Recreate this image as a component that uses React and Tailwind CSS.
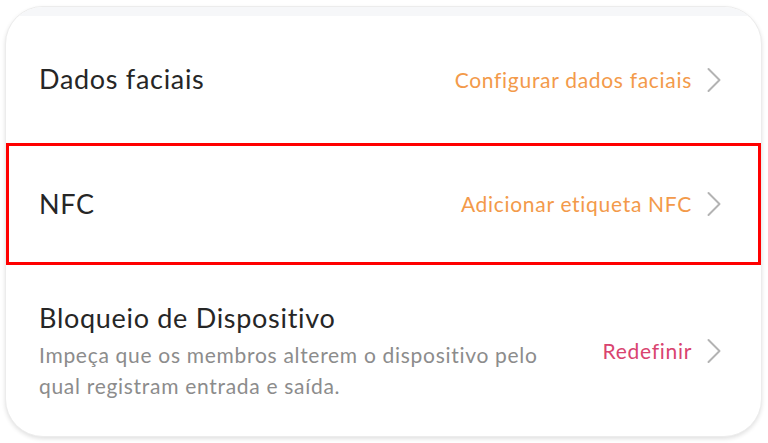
const Chevron = () => (
  <svg width="16" height="26" viewBox="0 0 16 26" fill="none" className="shrink-0">
    <path d="M2.5 2 L13.5 13 L2.5 24" stroke="#b3b3b3" strokeWidth="2" strokeLinecap="round" strokeLinejoin="round" />
  </svg>
);

function Action({ label, color }) {
  return (
    <div className="flex items-center gap-[14px]">
      <span className={`text-[21px] tracking-[0.7px] ${color}`}>{label}</span>
      <Chevron />
    </div>
  );
}

export default function App() {
  return (
    <div className="h-[443px] w-[768px] bg-white pt-[6px] pl-[5px] font-['Lato','Open_Sans',sans-serif]">
      <div className="w-[757px] h-[431px] rounded-[38px] bg-white border border-[#ececec] shadow-[0_2px_4px_rgba(0,0,0,0.12)] overflow-hidden flex flex-col">
        <div className="h-[9px] bg-[#f6f7f9] shrink-0" />
        <div className="h-[127px] flex items-center justify-between pl-[33px] pr-[39px]">
          <p className="text-[27px] tracking-[0.7px] text-[#262626]">Dados faciais</p>
          <Action label="Configurar dados faciais" color="text-[#f39a4a]" />
        </div>
        <div className="h-[122px] flex items-center justify-between border-[3px] border-[#ff0000] pl-[30px] pr-[36px]">
          <p className="text-[27px] tracking-[0.7px] text-[#262626]">NFC</p>
          <Action label="Adicionar etiqueta NFC" color="text-[#f39a4a]" />
        </div>
        <div className="flex items-center justify-between pl-[33px] pr-[39px] pt-[36px]">
          <div className="flex flex-col">
            <p className="text-[27px] tracking-[0.7px] leading-[34px] text-[#262626]">Bloqueio de Dispositivo</p>
            <p className="text-[21px] tracking-[0.7px] leading-[31px] text-[#8c8c8c] w-[505px] mt-[4px]">
              Impeça que os membros alterem o dispositivo pelo qual registram entrada e saída.
            </p>
          </div>
          <Action label="Redefinir" color="text-[#d9436f]" />
        </div>
      </div>
    </div>
  );
}
